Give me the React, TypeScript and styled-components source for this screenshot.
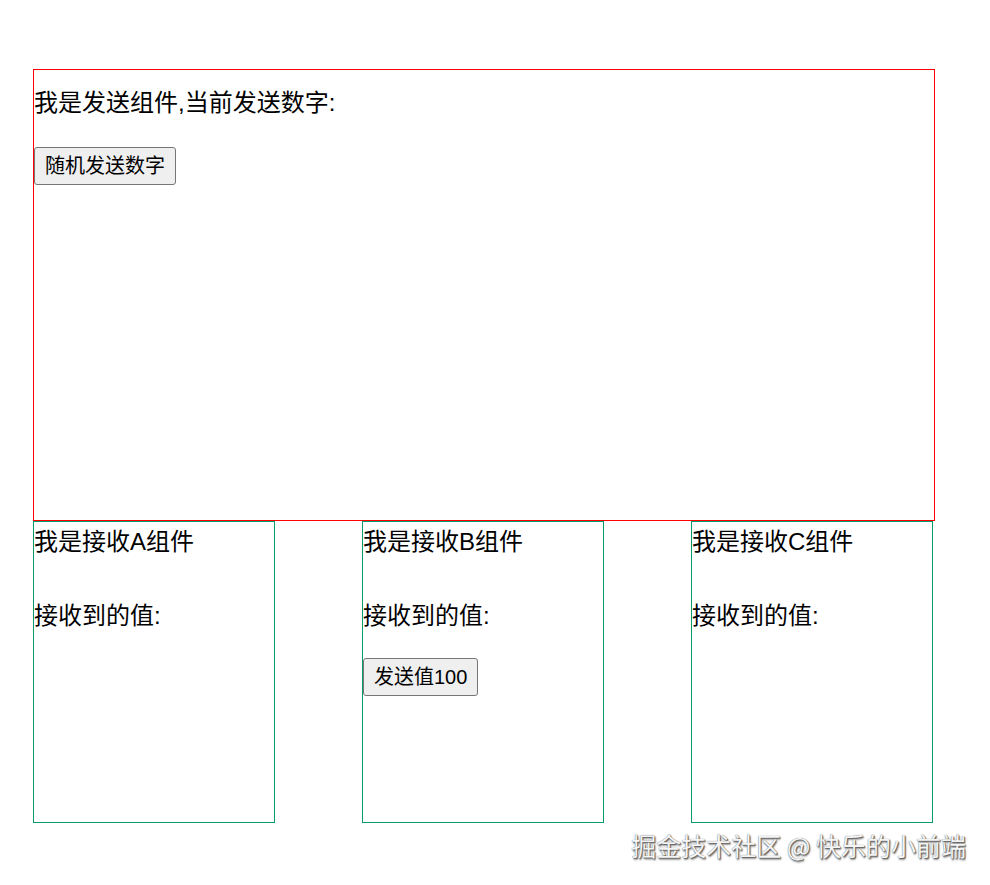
import * as React from 'react';
import styled, { createGlobalStyle } from 'styled-components';

const GlobalStyle = createGlobalStyle`
  html, body {
    margin: 0;
    padding: 0;
    background: #fff;
  }
  body {
    font-family: "Liberation Sans", "Noto Sans CJK SC", sans-serif;
    color: #000;
  }
`;

const Page = styled.div`
  position: relative;
  width: 990px;
  height: 885px;
  padding: 69px 0 0 33px;
  box-sizing: border-box;
`;

const SendPanel = styled.div`
  width: 900px;
  height: 450px;
  border: 1px solid red;
`;

const Line = styled.p<{ $top?: number; $bottom?: number }>`
  margin: ${(p) => p.$top ?? 0}px 0 ${(p) => p.$bottom ?? 0}px;
  font-size: 24px;
  line-height: 36px;
`;

const Button = styled.button`
  font-family: "Liberation Sans", "Noto Sans CJK SC", sans-serif;
  font-size: 20px;
  line-height: 28px;
  height: 38px;
  padding: 0 10px;
  border: 1px solid #767676;
  border-radius: 3px;
  background: #efefef;
  color: #000;
`;

const ReceiverRow = styled.div`
  display: flex;
  justify-content: space-between;
  width: 900px;
`;

const Receiver = styled.div`
  width: 240px;
  height: 300px;
  border: 1px solid #0a9a6c;
`;

const Watermark = styled.div`
  position: absolute;
  right: 24px;
  top: 829px;
  font-family: "Noto Sans CJK SC", sans-serif;
  font-size: 25px;
  line-height: 32px;
  color: #f4f4f4;
  text-shadow: 0 0 1px #555, 1px 1px 1px #666, 1px 2px 2px #999;
`;

const receivers = [
  { name: 'A', button: false },
  { name: 'B', button: true },
  { name: 'C', button: false },
];

export default function App() {
  return (
    <>
      <GlobalStyle />
      <Page>
        <SendPanel>
          <Line $top={15} $bottom={26}>我是发送组件,当前发送数字:</Line>
          <Button>随机发送数字</Button>
        </SendPanel>
        <ReceiverRow>
          {receivers.map((r) => (
            <Receiver key={r.name}>
              <Line $top={2} $bottom={38}>我是接收{r.name}组件</Line>
              <Line $bottom={24}>接收到的值:</Line>
              {r.button && <Button>发送值100</Button>}
            </Receiver>
          ))}
        </ReceiverRow>
        <Watermark>掘金技术社区 @ 快乐的小前端</Watermark>
      </Page>
    </>
  );
}
